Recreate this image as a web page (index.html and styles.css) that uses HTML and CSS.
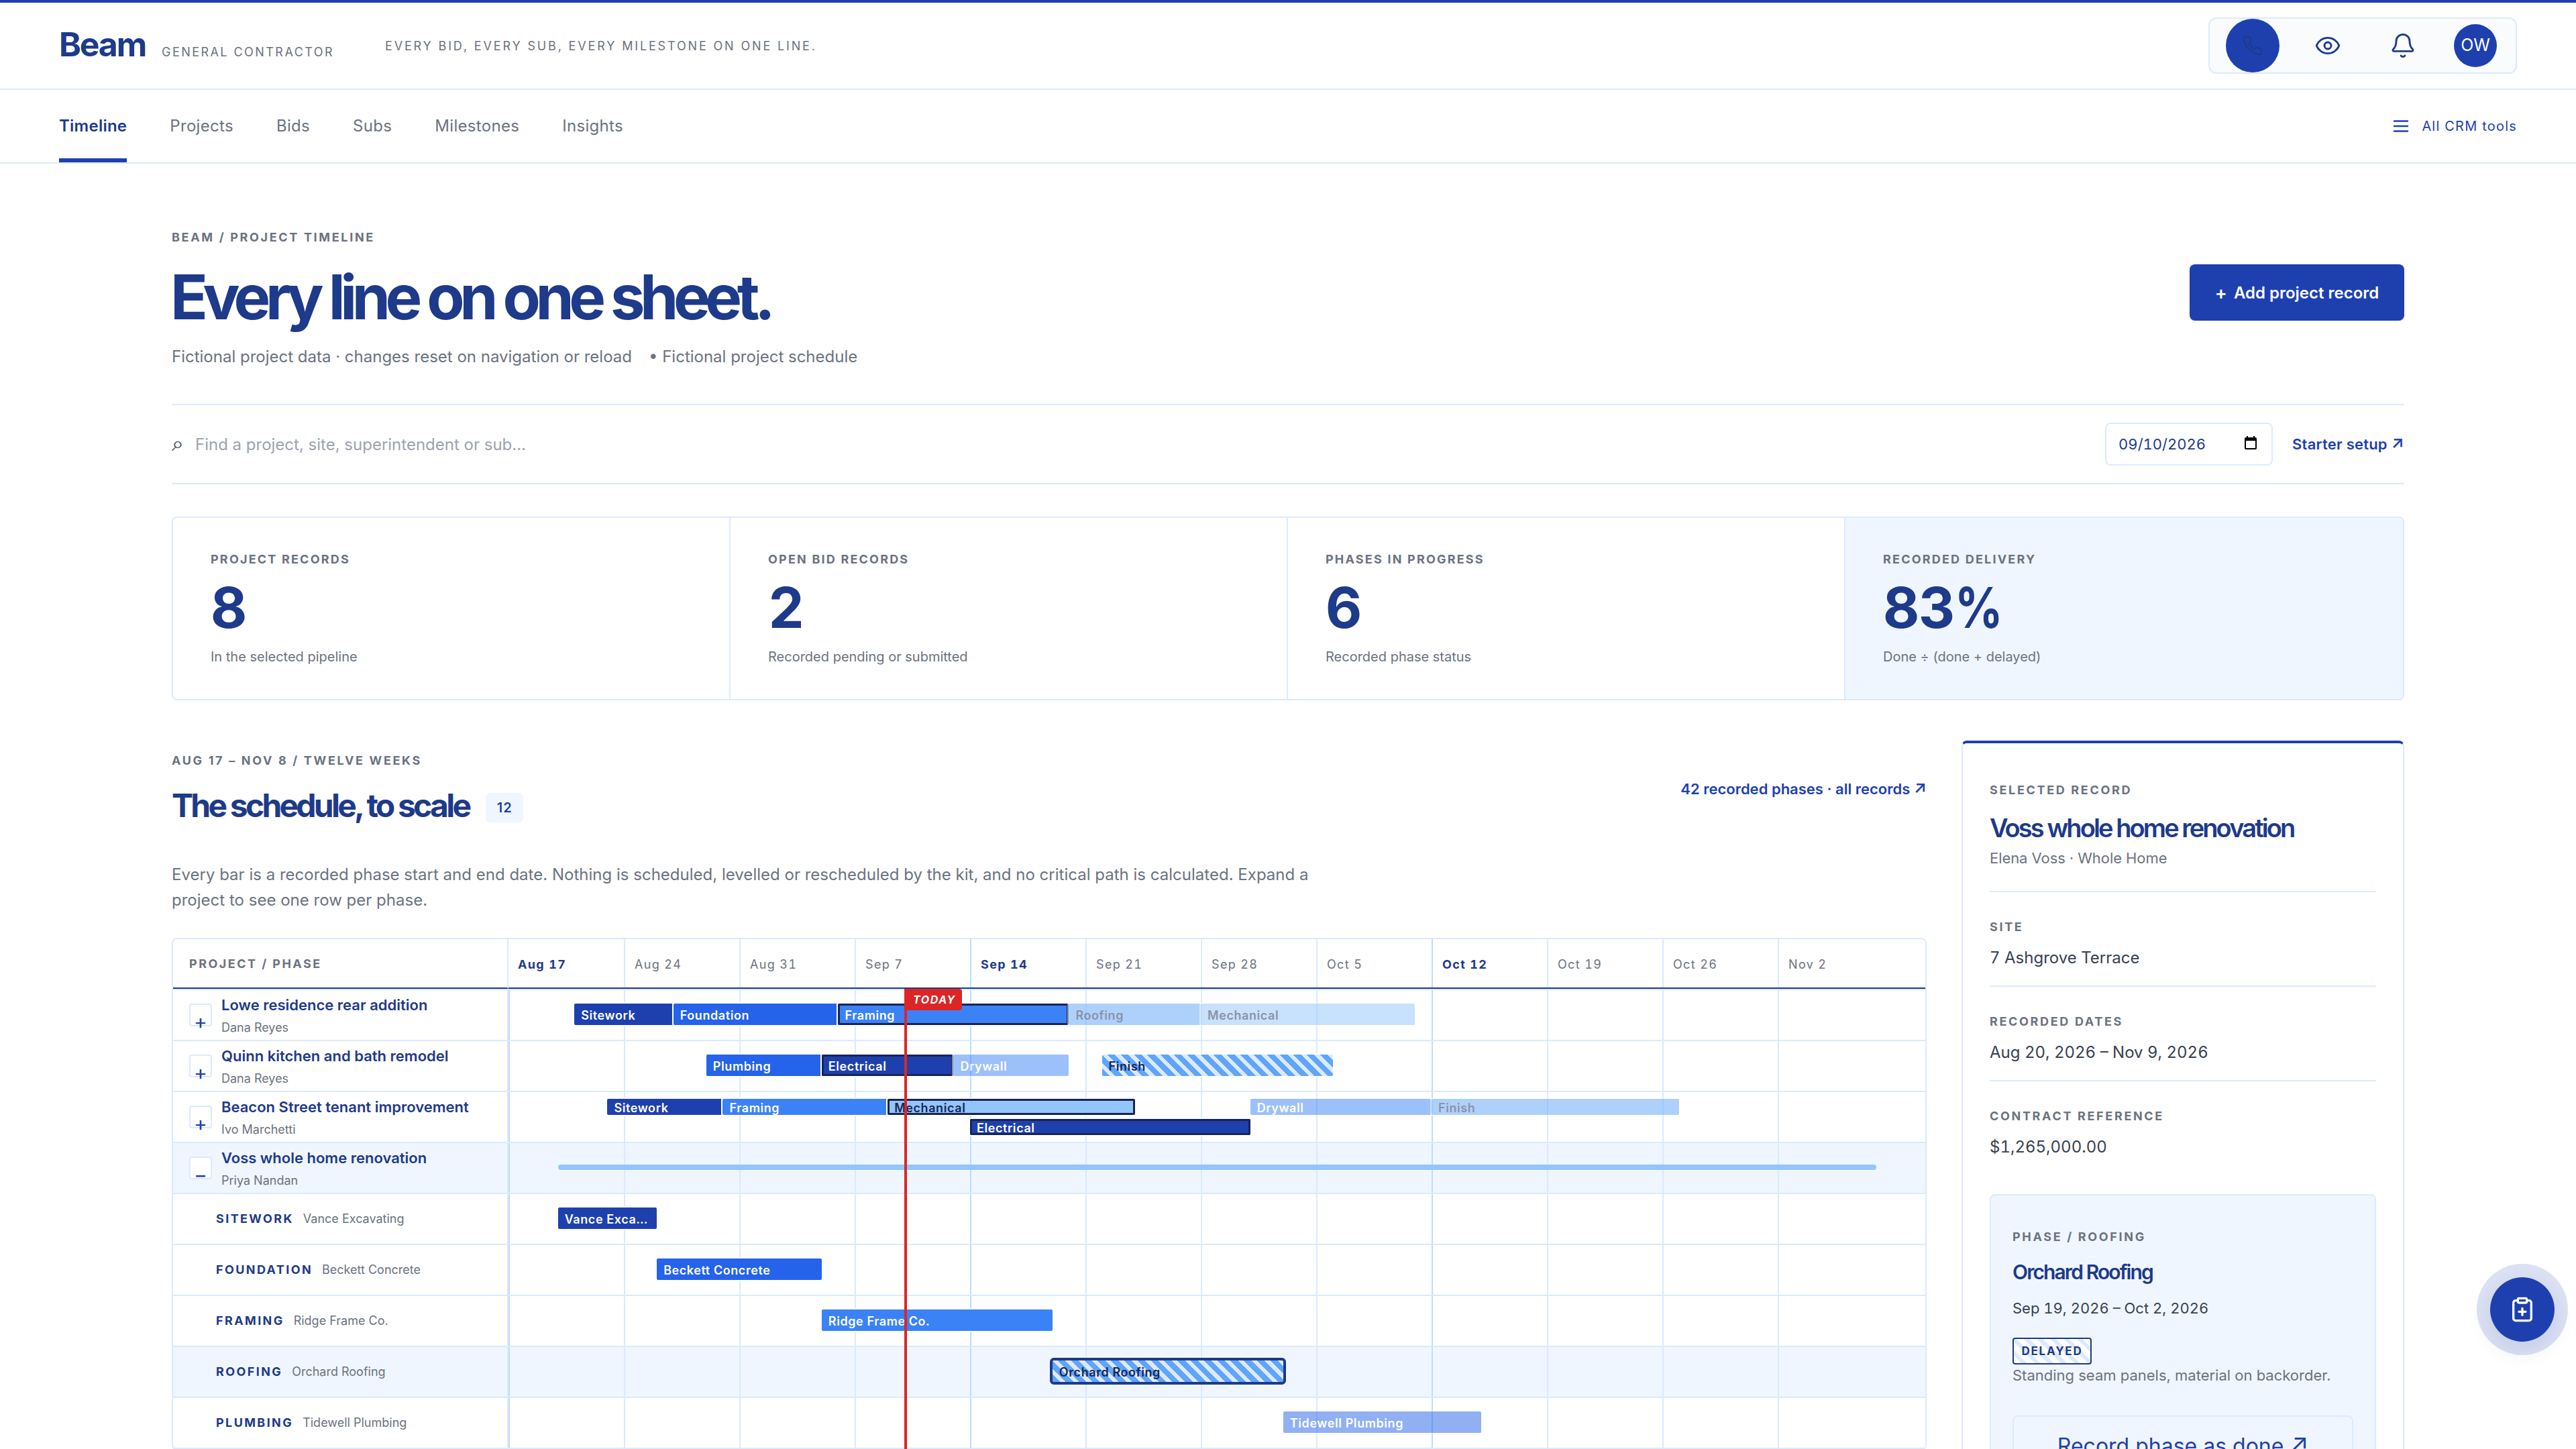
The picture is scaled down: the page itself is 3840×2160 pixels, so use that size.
FILE: index.html
```html
<!DOCTYPE html>
<html lang="en">
<head>
    <meta charset="UTF-8">
    <meta name="viewport" content="width=device-width, initial-scale=1.0">
    <title>Beam - Project Timeline</title>
    <link rel="stylesheet" href="styles.css">
</head>
<body>
    <header class="topbar">
        <div class="brand">
            <span class="brand-name">Beam</span>
            <span class="brand-sub">GENERAL CONTRACTOR</span>
        </div>
        <span class="tagline">EVERY BID, EVERY SUB, EVERY MILESTONE ON ONE LINE.</span>
        <div class="tools">
            <button class="tool call" aria-label="Call">
                <svg width="32" height="32" viewBox="0 0 24 24"><path d="M22 16.92v3a2 2 0 0 1-2.18 2 19.79 19.79 0 0 1-8.63-3.07 19.5 19.5 0 0 1-6-6 19.79 19.79 0 0 1-3.07-8.67A2 2 0 0 1 4.11 2h3a2 2 0 0 1 2 1.72 12.84 12.84 0 0 0 .7 2.81 2 2 0 0 1-.45 2.11L8.09 9.91a16 16 0 0 0 6 6l1.27-1.27a2 2 0 0 1 2.11-.45 12.84 12.84 0 0 0 2.81.7A2 2 0 0 1 22 16.92z"/></svg>
            </button>
            <button class="tool" aria-label="View">
                <svg width="40" height="40" viewBox="0 0 24 24"><path d="M2.062 12.348a1 1 0 0 1 0-.696 10.75 10.75 0 0 1 19.876 0 1 1 0 0 1 0 .696 10.75 10.75 0 0 1-19.876 0"/><circle cx="12" cy="12" r="3"/></svg>
            </button>
            <button class="tool" aria-label="Notifications">
                <svg width="40" height="40" viewBox="0 0 24 24"><path d="M10.268 21a2 2 0 0 0 3.464 0"/><path d="M3.262 15.326A1 1 0 0 0 4 17h16a1 1 0 0 0 .74-1.673C19.41 13.956 18 12.499 18 8A6 6 0 0 0 6 8c0 4.499-1.411 5.956-2.738 7.326"/></svg>
            </button>
            <span class="avatar">OW</span>
        </div>
    </header>

    <nav class="nav">
        <a class="tab active" href="#">Timeline</a>
        <a class="tab" href="#">Projects</a>
        <a class="tab" href="#">Bids</a>
        <a class="tab" href="#">Subs</a>
        <a class="tab" href="#">Milestones</a>
        <a class="tab" href="#">Insights</a>
        <a class="all-tools" href="#">
            <svg width="30" height="30" viewBox="0 0 24 24"><path d="M4 6h16M4 12h16M4 18h16"/></svg>
            All CRM tools
        </a>
    </nav>

    <main>
        <section class="page-head">
            <div>
                <p class="eyebrow">BEAM / PROJECT TIMELINE</p>
                <h1>Every line on one sheet.</h1>
                <p class="page-sub"><span>Fictional project data · changes reset on navigation or reload</span><span>• Fictional project schedule</span></p>
            </div>
            <button class="add"><span>+</span>Add project record</button>
        </section>

        <section class="filters">
            <span class="glass">⌕</span>
            <span class="placeholder">Find a project, site, superintendent or sub…</span>
            <div class="date">
                <span>09/10/2026</span>
                <svg width="18" height="20" viewBox="0 0 18 20"><path d="M2 2h14a2 2 0 0 1 2 2v14a2 2 0 0 1-2 2H2a2 2 0 0 1-2-2V4a2 2 0 0 1 2-2zM2 7v11h14V7zM3 0h2v2H3zM13 0h2v2h-2z" fill-rule="evenodd"/></svg>
            </div>
            <a class="link setup" href="#">Starter setup <i>↗</i></a>
        </section>

        <section class="stats">
            <div class="stat">
                <p class="eyebrow">PROJECT RECORDS</p>
                <p class="stat-value">8</p>
                <p class="stat-note">In the selected pipeline</p>
            </div>
            <div class="stat">
                <p class="eyebrow">OPEN BID RECORDS</p>
                <p class="stat-value">2</p>
                <p class="stat-note">Recorded pending or submitted</p>
            </div>
            <div class="stat">
                <p class="eyebrow">PHASES IN PROGRESS</p>
                <p class="stat-value">6</p>
                <p class="stat-note">Recorded phase status</p>
            </div>
            <div class="stat tinted">
                <p class="eyebrow">RECORDED DELIVERY</p>
                <p class="stat-value">83<span class="percent">%</span></p>
                <p class="stat-note">Done ÷ (done + delayed)</p>
            </div>
        </section>

        <div class="work">
            <section class="schedule">
                <div class="schedule-head">
                    <div>
                        <p class="eyebrow">AUG 17 – NOV 8 / TWELVE WEEKS</p>
                        <div class="title-row">
                            <h2>The schedule, to scale</h2>
                            <span class="count">12</span>
                        </div>
                    </div>
                    <a class="link" href="#">42 recorded phases · all records <i>↗</i></a>
                </div>
                <p class="intro">Every bar is a recorded phase start and end date. Nothing is scheduled, levelled or rescheduled by the kit, and no critical path is calculated. Expand a project to see one row per phase.</p>

                <!-- bars: --s is the start day counted from Aug 17, --n the number of days -->
                <div class="gantt">
                    <div class="row head">
                        <div class="label eyebrow">PROJECT / PHASE</div>
                        <div class="weeks">
                            <span class="major">Aug 17</span><span>Aug 24</span><span>Aug 31</span><span>Sep 7</span>
                            <span class="major">Sep 14</span><span>Sep 21</span><span>Sep 28</span><span>Oct 5</span>
                            <span class="major">Oct 12</span><span>Oct 19</span><span>Oct 26</span><span>Nov 2</span>
                        </div>
                    </div>
                    <div class="row">
                        <div class="label">
                            <button class="toggle">+</button>
                            <div><p class="name">Lowe residence rear addition</p><p class="who">Dana Reyes</p></div>
                        </div>
                        <div class="track">
                            <span class="bar navy" style="--s:4;--n:6">Sitework</span>
                            <span class="bar royal" style="--s:10;--n:10">Foundation</span>
                            <span class="bar blue current" style="--s:20;--n:14">Framing</span>
                            <span class="bar sky planned" style="--s:34;--n:8">Roofing</span>
                            <span class="bar pale planned" style="--s:42;--n:13">Mechanical</span>
                        </div>
                    </div>
                    <div class="row">
                        <div class="label">
                            <button class="toggle">+</button>
                            <div><p class="name">Quinn kitchen and bath remodel</p><p class="who">Dana Reyes</p></div>
                        </div>
                        <div class="track">
                            <span class="bar royal" style="--s:12;--n:7">Plumbing</span>
                            <span class="bar navy current" style="--s:19;--n:8">Electrical</span>
                            <span class="bar blue planned" style="--s:27;--n:7">Drywall</span>
                            <span class="bar delayed" style="--s:36;--n:14">Finish</span>
                        </div>
                    </div>
                    <div class="row">
                        <div class="label">
                            <button class="toggle">+</button>
                            <div><p class="name">Beacon Street tenant improvement</p><p class="who">Ivo Marchetti</p></div>
                        </div>
                        <div class="track lanes">
                            <span class="bar navy" style="--s:6;--n:7">Sitework</span>
                            <span class="bar blue" style="--s:13;--n:10">Framing</span>
                            <span class="bar pale current" style="--s:23;--n:15">Mechanical</span>
                            <span class="bar navy current second" style="--s:28;--n:17">Electrical</span>
                            <span class="bar blue planned" style="--s:45;--n:11">Drywall</span>
                            <span class="bar sky planned" style="--s:56;--n:15">Finish</span>
                        </div>
                    </div>
                    <div class="row selected">
                        <div class="label">
                            <button class="toggle">−</button>
                            <div><p class="name">Voss whole home renovation</p><p class="who">Priya Nandan</p></div>
                        </div>
                        <div class="track"><span class="span-line" style="--s:3;--n:80"></span></div>
                    </div>
                    <div class="row">
                        <div class="label phase"><b>SITEWORK</b><span>Vance Excavating</span></div>
                        <div class="track"><span class="bar navy" style="--s:3;--n:6">Vance Exca…</span></div>
                    </div>
                    <div class="row">
                        <div class="label phase"><b>FOUNDATION</b><span>Beckett Concrete</span></div>
                        <div class="track"><span class="bar royal" style="--s:9;--n:10">Beckett Concrete</span></div>
                    </div>
                    <div class="row">
                        <div class="label phase"><b>FRAMING</b><span>Ridge Frame Co.</span></div>
                        <div class="track"><span class="bar blue" style="--s:19;--n:14">Ridge Frame Co.</span></div>
                    </div>
                    <div class="row selected">
                        <div class="label phase"><b>ROOFING</b><span>Orchard Roofing</span></div>
                        <div class="track"><span class="bar delayed picked" style="--s:33;--n:14">Orchard Roofing</span></div>
                    </div>
                    <div class="row">
                        <div class="label phase"><b>PLUMBING</b><span>Tidewell Plumbing</span></div>
                        <div class="track"><span class="bar royal planned" style="--s:47;--n:12">Tidewell Plumbing</span></div>
                    </div>
                    <div class="today"><em>TODAY</em></div>
                </div>
            </section>

            <aside class="record">
                <p class="eyebrow">SELECTED RECORD</p>
                <h3>Voss whole home renovation</h3>
                <p class="record-sub">Elena Voss · Whole Home</p>
                <div class="fact">
                    <p class="eyebrow">SITE</p>
                    <p class="fact-value">7 Ashgrove Terrace</p>
                </div>
                <div class="fact">
                    <p class="eyebrow">RECORDED DATES</p>
                    <p class="fact-value">Aug 20, 2026 – Nov 9, 2026</p>
                </div>
                <div class="fact">
                    <p class="eyebrow">CONTRACT REFERENCE</p>
                    <p class="fact-value">$1,265,000.00</p>
                </div>
                <div class="phase-card">
                    <p class="eyebrow">PHASE / ROOFING</p>
                    <h4>Orchard Roofing</h4>
                    <p class="phase-dates">Sep 19, 2026 – Oct 2, 2026</p>
                    <span class="status">DELAYED</span>
                    <p class="phase-note">Standing seam panels, material on backorder.</p>
                    <button class="done">Record phase as done <i>↗</i></button>
                </div>
            </aside>
        </div>
    </main>

    <button class="fab" aria-label="Add record">
        <svg width="40" height="40" viewBox="0 0 24 24"><rect x="8" y="2" width="8" height="4" rx="1" ry="1"/><path d="M16 4h2a2 2 0 0 1 2 2v14a2 2 0 0 1-2 2H6a2 2 0 0 1-2-2V6a2 2 0 0 1 2-2h2M9 14h6M12 17v-6"/></svg>
    </button>
</body>
</html>
```
FILE: styles.css
```css
* {
    box-sizing: border-box;
}
body {
    margin: 0;
    height: 2160px;
    overflow: hidden;
    background-color: #fff;
    color: #374151;
    font-family: Inter, "Liberation Sans", sans-serif;
    font-size: 24px;
}
h1, h2, h3, h4, p {
    margin: 0;
}
a {
    text-decoration: none;
}
button {
    font-family: inherit;
    padding: 0;
    border: none;
    cursor: pointer;
}
svg {
    display: block;
    flex: none;
    fill: none;
    stroke: currentColor;
    stroke-width: 2;
    stroke-linecap: round;
    stroke-linejoin: round;
}
.eyebrow {
    font-size: 18px;
    font-weight: 700;
    line-height: 28px;
    letter-spacing: 0.148em;
    color: #6b7280;
}
.link {
    font-size: 22px;
    font-weight: 600;
    color: #1e40af;
}
.link i, .done i {
    display: inline-block;
    font-style: normal;
    font-size: 1.12em;
    line-height: 1;
    transform: translateY(-0.1em);
}
.setup {
    letter-spacing: 0.01em;
}

/* header */
.topbar {
    display: flex;
    align-items: center;
    height: 134px;
    padding: 0 88px;
    border-top: 4px solid #1e40af;
    border-bottom: 2px solid #dbeafe;
}
.brand {
    display: flex;
    align-items: baseline;
    gap: 24px;
    padding-bottom: 4px;
}
.brand-name {
    font-size: 50px;
    font-weight: 700;
    letter-spacing: -0.045em;
    color: #1e3a8a;
}
.brand-sub {
    font-size: 18px;
    letter-spacing: 0.136em;
    color: #6b7280;
}
.tagline {
    margin-left: 76px;
    font-size: 18px;
    letter-spacing: 0.158em;
    color: #6b7280;
}
.tools {
    display: flex;
    align-items: center;
    gap: 32px;
    height: 84px;
    margin-left: auto;
    padding: 0 28px 0 24px;
    border: 2px solid #dbeafe;
    border-radius: 12px;
    background-color: #f9fbfd;
}
.tool {
    display: flex;
    align-items: center;
    justify-content: center;
    width: 80px;
    height: 80px;
    border-radius: 50%;
    background: none;
    color: #1e3a8a;
}
.tool svg {
    stroke-width: 1.75;
}
.tool.call {
    background-color: #1e40af;
}
.avatar {
    width: 64px;
    margin-left: 4px;
    border-radius: 50%;
    background-color: #1e40af;
    color: #fff;
    font-size: 25px;
    line-height: 62px;
    padding-bottom: 2px;
    text-align: center;
}
.nav {
    display: flex;
    gap: 64px;
    height: 110px;
    padding: 0 88px;
    border-bottom: 2px solid #dbeafe;
}
.tab {
    height: 108px;
    line-height: 107px;
    letter-spacing: 0.013em;
    color: #6b7280;
}
.tab.active {
    font-weight: 600;
    letter-spacing: 0.01em;
    color: #1e3a8a;
    box-shadow: inset 0 -6px #1e40af;
}
.all-tools {
    display: flex;
    align-items: center;
    gap: 16px;
    margin-left: auto;
    font-size: 20px;
    letter-spacing: 0.06em;
    color: #1e40af;
}

/* page head */
main {
    width: 3328px;
    margin: 0 auto;
    padding-top: 96px;
}
.page-head {
    display: flex;
    justify-content: space-between;
    align-items: flex-end;
    padding-bottom: 51px;
    border-bottom: 2px solid #dbeafe;
}
h1 {
    margin-top: 29px;
    margin-left: -2px;
    font-size: 92px;
    line-height: 92px;
    letter-spacing: -0.0808em;
    color: #1e3a8a;
}
.page-sub {
    display: flex;
    gap: 25px;
    margin-top: 24px;
    line-height: 38px;
    color: #6b7280;
}
.add {
    display: flex;
    align-items: center;
    justify-content: center;
    gap: 10px;
    width: 320px;
    height: 84px;
    margin-bottom: 73px;
    border-radius: 8px;
    background-color: #1e40af;
    color: #fff;
    font-size: 24px;
    font-weight: 600;
}
.add span {
    font-size: 27px;
}
.filters {
    display: flex;
    align-items: center;
    height: 118px;
    border-bottom: 2px solid #dbeafe;
}
.glass {
    width: 35px;
    font-size: 32px;
    line-height: 32px;
    padding-bottom: 2px;
    color: #374151;
}
.placeholder {
    flex: 1;
    color: #9ca3af;
}
.date {
    display: flex;
    align-items: center;
    justify-content: space-between;
    width: 250px;
    height: 64px;
    margin-right: 29px;
    padding: 0 22px 0 18px;
    border: 2px solid #dbeafe;
    border-radius: 8px;
    font-size: 22px;
    font-variant-numeric: tabular-nums;
    color: #1e3a8a;
}
.date svg {
    fill: #000;
    stroke: none;
    margin-bottom: 4px;
}

/* numbers */
.stats {
    display: grid;
    grid-template-columns: repeat(4, 1fr);
    height: 274px;
    margin-top: 48px;
    border: 2px solid #dbeafe;
    border-radius: 8px;
    overflow: hidden;
}
.stat {
    padding: 48px 56px 0;
    border-right: 2px solid #dbeafe;
}
.stat:last-child {
    border-right: none;
}
.stat .eyebrow {
    letter-spacing: 0.122em;
}
.stat.tinted {
    background-color: #eff6ff;
}
.stat-value {
    margin-top: 16px;
    font-size: 84px;
    font-weight: 700;
    line-height: 84px;
    letter-spacing: -0.01em;
    font-variant-numeric: tabular-nums;
    color: #1e3a8a;
}
.percent {
    display: inline-block;
    transform: scaleX(0.84);
    transform-origin: left;
}
.stat-note {
    margin-top: 15px;
    font-size: 20px;
    line-height: 32px;
    color: #6b7280;
}

/* schedule */
.work {
    display: grid;
    grid-template-columns: 2616px 660px;
    gap: 52px;
    margin-top: 60px;
}
.schedule-head {
    display: flex;
    justify-content: space-between;
    align-items: center;
    padding-top: 16px;
}
.schedule-head .link {
    margin-top: 5px;
}
.title-row {
    display: flex;
    align-items: center;
    gap: 25px;
    margin-top: 27px;
}
h2 {
    font-size: 48px;
    line-height: 52px;
    letter-spacing: -0.0785em;
    color: #1e3a8a;
}
.count {
    margin-top: 6px;
    width: 56px;
    border-radius: 6px;
    background-color: #eff6ff;
    color: #1e40af;
    font-size: 20px;
    font-weight: 600;
    line-height: 44px;
    letter-spacing: 0.05em;
    text-align: center;
}
.intro {
    width: 1740px;
    margin: 58px 0 36px;
    line-height: 38.4px;
    letter-spacing: 0.0005em;
    color: #6b7280;
}
.gantt {
    --day: calc(172px / 7);
    position: relative;
    border: 2px solid #dbeafe;
    border-radius: 8px;
}
.row {
    display: flex;
    height: 76px;
    border-bottom: 2px solid #dbeafe;
}
.row.selected {
    background-color: #eff6ff;
}
.label {
    display: flex;
    width: 500px;
    padding: 7px 0 0 24px;
    border-right: 2px solid #dbeafe;
}
.head .label {
    align-items: center;
    padding-top: 2px;
    letter-spacing: 0.137em;
    border-bottom: 2px solid #1e3a8a;
}
.weeks {
    display: grid;
    grid-template-columns: repeat(11, 172px) 1fr;
    flex: 1;
    border-bottom: 2px solid #1e3a8a;
}
.weeks span {
    height: 72px;
    padding-left: 14px;
    border-left: 2px solid #dbeafe;
    font-size: 18px;
    line-height: 75px;
    letter-spacing: 0.075em;
    font-variant-numeric: tabular-nums;
    color: #6b7280;
}
.weeks .major {
    border-color: #bfdbfe;
    font-weight: 700;
    color: #1e3a8a;
}
.weeks span:first-child {
    border-left: none;
}
.toggle {
    width: 34px;
    height: 34px;
    margin: 13px 14px 0 0;
    border: 2px solid #dbeafe;
    border-radius: 4px;
    background-color: #fff;
    color: #1e40af;
    font-size: 30px;
    line-height: 50px;
}
.name {
    font-size: 22px;
    font-weight: 600;
    line-height: 30px;
    color: #1e3a8a;
}
.who {
    margin-top: 7px;
    font-size: 18px;
    line-height: 24px;
    color: #6b7280;
}
.phase {
    align-items: center;
    gap: 14px;
    padding: 0 0 0 64px;
    font-size: 18px;
    color: #6b7280;
}
.phase b {
    letter-spacing: 0.133em;
    color: #1e3a8a;
}
.track {
    position: relative;
    flex: 1;
    background-image:
        repeating-linear-gradient(90deg, #bfdbfe 0 2px, transparent 2px 688px),
        repeating-linear-gradient(90deg, #dbeafe 0 2px, transparent 2px 172px);
    background-size: 2060px 100%;
    background-repeat: no-repeat;
}
.bar {
    position: absolute;
    top: 20px;
    left: calc(var(--s) * var(--day));
    width: calc(var(--n) * var(--day));
    height: 32px;
    padding: 0 10px;
    border-radius: 2px;
    box-shadow: 0 0 0 2px #fff;
    color: #fff;
    font-size: 18px;
    font-weight: 600;
    line-height: 36px;
    letter-spacing: 0.032em;
    white-space: nowrap;
}
.lanes .bar {
    top: 10px;
    height: 24px;
    line-height: 28px;
}
.lanes .second {
    top: 40px;
}
.navy {
    background-color: #1e40af;
}
.royal {
    background-color: #2563eb;
}
.blue {
    background-color: #3b82f6;
}
.sky {
    background-color: #60a5fa;
    color: #172554;
}
.pale {
    background-color: #93c5fd;
    color: #172554;
}
.current {
    box-shadow: inset 0 0 0 3px #172554, 0 0 0 2px #fff;
}
.planned {
    opacity: 0.5;
}
.delayed {
    background: repeating-linear-gradient(45deg, #60a5fa 0 8px, #dbeafe 8px 14px);
    color: #172554;
}
.picked {
    outline: 4px solid #1e3a8a;
}
.span-line {
    position: absolute;
    top: 32px;
    left: calc(var(--s) * var(--day));
    width: calc(var(--n) * var(--day));
    height: 8px;
    border-radius: 4px;
    background-color: #93c5fd;
}
.today {
    position: absolute;
    top: 74px;
    bottom: 0;
    left: 1090px;
    width: 4px;
    background-color: #dc2626;
}
.today em {
    display: block;
    width: 86px;
    padding-left: 13px;
    border-radius: 0 4px 4px 0;
    background-color: #dc2626;
    color: #fff;
    font-size: 16px;
    font-weight: 700;
    line-height: 32px;
    letter-spacing: 0.1em;
}

/* selected record */
.record {
    padding: 56px 40px 0;
    border: 2px solid #dbeafe;
    border-top: 4px solid #1e40af;
    border-radius: 8px;
}
h3 {
    margin-top: 19px;
    font-size: 38px;
    font-weight: 600;
    line-height: 46px;
    letter-spacing: -0.0765em;
    color: #1e3a8a;
    white-space: nowrap;
}
.record-sub {
    margin: 6px 0 33px;
    font-size: 22px;
    line-height: 32px;
    letter-spacing: -0.003em;
    color: #6b7280;
}
.fact {
    height: 141px;
    padding-top: 38px;
    border-top: 2px solid #dbeafe;
}
.fact-value {
    margin-top: 13px;
    line-height: 38px;
    font-variant-numeric: tabular-nums;
}
.phase-card {
    margin-top: 29px;
    padding: 48px 32px;
    border: 2px solid #dbeafe;
    border-radius: 8px;
    background-color: #eff6ff;
}
h4 {
    margin-top: 20px;
    font-size: 30px;
    font-weight: 600;
    line-height: 36px;
    letter-spacing: -0.0635em;
    color: #1e3a8a;
}
.phase-dates {
    margin: 20px 0 28px;
    font-size: 22px;
    line-height: 32px;
    font-variant-numeric: tabular-nums;
}
.status {
    display: block;
    width: 118px;
    height: 40px;
    border: 2px solid #1e3a8a;
    border-radius: 4px;
    background: repeating-linear-gradient(45deg, #fff 0 8px, #dbeafe 8px 14px);
    color: #1e3a8a;
    font-size: 17px;
    font-weight: 700;
    line-height: 36px;
    letter-spacing: 0.105em;
    text-align: center;
}
.phase-note {
    font-size: 22px;
    line-height: 32px;
    color: #6b7280;
    white-space: nowrap;
}
.done {
    width: 100%;
    height: 90px;
    margin-top: 44px;
    border: 2px solid #dbeafe;
    border-radius: 8px;
    background: none;
    color: #1e40af;
    font-size: 32px;
}

.fab {
    position: fixed;
    right: 32px;
    top: 1904px;
    display: flex;
    align-items: center;
    justify-content: center;
    width: 96px;
    height: 96px;
    border-radius: 50%;
    background-color: #1e40af;
    color: #fff;
    box-shadow: 0 0 0 20px rgba(30, 64, 175, 0.16), 0 12px 32px rgba(30, 58, 138, 0.12);
}
```
